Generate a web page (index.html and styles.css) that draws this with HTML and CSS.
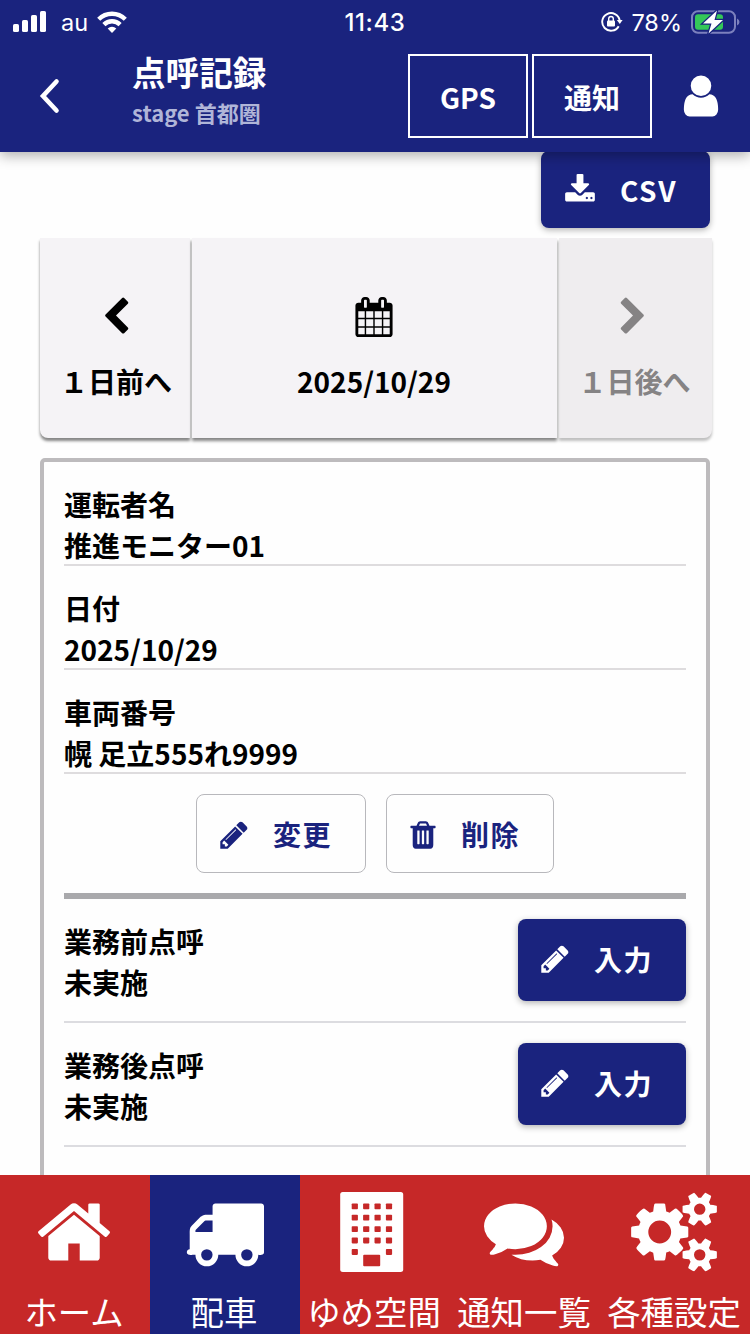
FILE: index.html
```html
<!DOCTYPE html>
<html lang="ja">
<head>
<meta charset="utf-8">
<title>点呼記録</title>
<link rel="stylesheet" href="styles.css">
</head>
<body>
<svg class="defs" width="0" height="0" aria-hidden="true">
  <symbol id="pencil" viewBox="0 0 1792 1792"><path d="M491 1536l91-91-235-235-91 91v107h128v128h107zm523-928q0-22-22-22-10 0-17 7l-542 542q-7 7-7 17 0 22 22 22 10 0 17-7l542-542q7-7 7-17zm-54-192l416 416-832 832h-416v-416zm683 96q0 53-37 90l-166 166-416-416 166-165q36-38 90-38 53 0 91 38l235 234q37 39 37 91z"/></symbol>
</svg>
<div class="app">
  <header class="header">
    <div class="status">
      <div class="status-left">
        <svg width="34" height="22" viewBox="0 0 34 22" fill="currentColor"><rect x="0" y="13" width="6" height="8" rx="1.6"/><rect x="9" y="9" width="6" height="12" rx="1.6"/><rect x="18" y="4" width="6" height="17" rx="1.6"/><rect x="27" y="0" width="6" height="21" rx="1.6"/></svg>
        <span class="carrier">au</span>
        <svg width="30" height="22" viewBox="0 0 30 22" fill="none" stroke="currentColor" stroke-width="4.4"><path d="M1.700 8.200a19 19 0 0 1 26.600 0M6.900 13.600a11.500 11.500 0 0 1 16.200 0"/><path d="M15 22l-4.300-4.400a6.200 6.200 0 0 1 8.600 0z" fill="currentColor" stroke="none"/></svg>
      </div>
      <span class="clock">11:43</span>
      <div class="status-right">
        <svg width="22" height="22" viewBox="0 0 22 22"><path d="M17.700 15.200A8.800 8.800 0 1 1 18.700 9.500" fill="none" stroke="currentColor" stroke-width="1.900"/><path d="M15.800 9h5.800l-2.800 4z" fill="currentColor"/><rect x="6" y="9.400" width="8" height="6" rx="1" fill="currentColor"/><path d="M7.700 10V7.800a2.300 2.300 0 0 1 4.600 0V10" fill="none" stroke="currentColor" stroke-width="1.400"/></svg>
        <span class="percent">78%</span>
        <svg width="50" height="24" viewBox="0 0 50 24"><rect x="1" y="1.300" width="43" height="21.400" rx="6" fill="none" stroke="#7c80bd" stroke-width="2"/><path d="M46 8.500q2.500 1 2.500 3.500T46 15.500z" fill="#7c80bd"/><rect x="4" y="4.300" width="28" height="15.400" rx="3" fill="#34c759"/><path d="M26 .5L12 13.500h8.500L17.500 23.500 32 10h-8.500z" fill="#fff" stroke="#1a237e" stroke-width="2.500" paint-order="stroke"/></svg>
      </div>
    </div>
    <div class="toolbar">
      <button class="back" aria-label="back"><svg width="24" height="38" viewBox="0 0 24 38"><path d="M18.500 4.500L5 19l13.500 14.500" fill="none" stroke="currentColor" stroke-width="4.600" stroke-linecap="round"/></svg></button>
      <div class="titles">
        <h1 class="title">点呼記録</h1>
        <p class="subtitle">stage 首都圏</p>
      </div>
      <button class="outline">GPS</button>
      <button class="outline">通知</button>
      <button class="user" aria-label="user"><svg class="i48" viewBox="0 0 1792 1792"><path d="M1536 1399q0 109-62.500 187t-150.500 78h-854q-88 0-150.500-78t-62.500-187q0-85 8.500-160.500t31.500-152 58.500-131 94-89 134.500-34.500q131 128 313 128t313-128q76 0 134.500 34.500t94 89 58.500 131 31.500 152 8.500 160.500zm-256-887q0 159-112.500 271.500t-271.500 112.500-271.500-112.500-112.500-271.500 112.500-271.500 271.500-112.500 271.500 112.500 112.500 271.500z"/></svg></button>
    </div>
  </header>

  <main class="content">
    <button class="btn primary csv"><svg class="i32" viewBox="0 0 1792 1792"><path d="M1344 1344q0-26-19-45t-45-19-45 19-19 45 19 45 45 19 45-19 19-45zm256 0q0-26-19-45t-45-19-45 19-19 45 19 45 45 19 45-19 19-45zm128-224v320q0 40-28 68t-68 28h-1472q-40 0-68-28t-28-68v-320q0-40 28-68t68-28h465l135 136q58 56 136 56t136-56l136-136h464q40 0 68 28t28 68zm-325-569q17 41-14 70l-448 448q-18 19-45 19t-45-19l-448-448q-31-29-14-70 17-39 59-39h256v-448q0-26 19-45t45-19h256q26 0 45 19t19 45v448h256q42 0 59 39z"/></svg><span>CSV</span></button>

    <nav class="days">
      <button class="day prev"><svg class="i40" viewBox="0 0 1792 1792"><path d="M1427 301l-531 531 531 531q19 19 19 45t-19 45l-166 166q-19 19-45 19t-45-19l-742-742q-19-19-19-45t19-45l742-742q19-19 45-19t45 19l166 166q19 19 19 45t-19 45z"/></svg><span>１日前へ</span></button>
      <button class="day date"><svg class="i40" viewBox="0 0 1792 1792"><path d="M192 1664h288v-288h-288v288zm352 0h320v-288h-320v288zm-352-352h288v-320h-288v320zm352 0h320v-320h-320v320zm-352-384h288v-288h-288v288zm736 736h320v-288h-320v288zm-384-736h320v-288h-320v288zm768 736h288v-288h-288v288zm-384-352h320v-320h-320v320zm-352-864v-288q0-13-9.500-22.500t-22.500-9.500h-64q-13 0-22.500 9.500t-9.500 22.500v288q0 13 9.500 22.500t22.500 9.500h64q13 0 22.500-9.500t9.500-22.500zm736 864h288v-320h-288v320zm-384-384h320v-288h-320v288zm384 0h288v-288h-288v288zm32-480v-288q0-13-9.500-22.500t-22.500-9.500h-64q-13 0-22.500 9.500t-9.500 22.500v288q0 13 9.500 22.500t22.500 9.500h64q13 0 22.500-9.500t9.500-22.500zm384-64v1280q0 52-38 90t-90 38h-1408q-52 0-90-38t-38-90v-1280q0-52 38-90t90-38h128v-96q0-66 47-113t113-47h64q66 0 113 47t47 113v96h384v-96q0-66 47-113t113-47h64q66 0 113 47t47 113v96h128q52 0 90 38t38 90z"/></svg><span>2025/10/29</span></button>
      <button class="day next" disabled><svg class="i40" viewBox="0 0 1792 1792"><path d="M1363 877l-742 742q-19 19-45 19t-45-19l-166-166q-19-19-19-45t19-45l531-531-531-531q-19-19-19-45t19-45l166-166q19-19 45-19t45 19l742 742q19 19 19 45t-19 45z"/></svg><span>１日後へ</span></button>
    </nav>

    <section class="card">
      <dl class="fields">
        <div class="field"><dt>運転者名</dt><dd>推進モニター01</dd></div>
        <div class="field"><dt>日付</dt><dd>2025/10/29</dd></div>
        <div class="field"><dt>車両番号</dt><dd>幌 足立555れ9999</dd></div>
      </dl>
      <div class="actions">
        <button class="btn light edit"><svg class="i32"><use href="#pencil"/></svg><span>変更</span></button>
        <button class="btn light remove"><svg class="i32" viewBox="0 0 1792 1792"><path d="M704 1376v-704q0-14-9-23t-23-9h-64q-14 0-23 9t-9 23v704q0 14 9 23t23 9h64q14 0 23-9t9-23zm256 0v-704q0-14-9-23t-23-9h-64q-14 0-23 9t-9 23v704q0 14 9 23t23 9h64q14 0 23-9t9-23zm256 0v-704q0-14-9-23t-23-9h-64q-14 0-23 9t-9 23v704q0 14 9 23t23 9h64q14 0 23-9t9-23zm-544-992h448l-48-117q-7-9-17-11h-317q-10 2-17 11zm928 32v64q0 14-9 23t-23 9h-96v948q0 83-47 143.500t-113 60.500h-832q-66 0-113-58.500t-47-141.500v-952h-96q-14 0-23-9t-9-23v-64q0-14 9-23t23-9h309l70-167q15-37 54-63t79-26h320q40 0 79 26t54 63l70 167h309q14 0 23 9t9 23z"/></svg><span>削除</span></button>
      </div>
      <div class="call first">
        <div class="call-text"><p>業務前点呼</p><p>未実施</p></div>
        <button class="btn primary input"><svg class="i32"><use href="#pencil"/></svg><span>入力</span></button>
      </div>
      <div class="call">
        <div class="call-text"><p>業務後点呼</p><p>未実施</p></div>
        <button class="btn primary input"><svg class="i32"><use href="#pencil"/></svg><span>入力</span></button>
      </div>
    </section>
  </main>

  <nav class="tabs">
    <a class="tab"><svg class="i80" viewBox="0 0 1792 1792"><path d="M1472 992v480q0 26-19 45t-45 19h-384v-384h-256v384h-384q-26 0-45-19t-19-45v-480q0-1 .5-3t.5-3l575-474 575 474q1 2 1 6zm223-69l-62 74q-8 9-21 11h-3q-13 0-21-7l-692-577-692 577q-12 8-24 7-13-2-21-11l-62-74q-8-10-7-23.500t11-21.500l719-599q32-26 76-26t76 26l244 204v-195q0-14 9-23t23-9h192q14 0 23 9t9 23v408l219 182q10 8 11 21.500t-7 23.500z"/></svg><span>ホーム</span></a>
    <a class="tab active"><svg class="i80" viewBox="0 0 1792 1792"><path d="M640 1408q0-52-38-90t-90-38-90 38-38 90 38 90 90 38 90-38 38-90zm-384-512h384v-256h-158q-13 0-22 9l-195 195q-9 9-9 22v30zm1280 512q0-52-38-90t-90-38-90 38-38 90 38 90 90 38 90-38 38-90zm256-1088v1024q0 15-4 26.500t-13.500 18.500-16.500 11.500-23.500 6-22.500 2-25.500 0-22.500-.5q0 106-75 181t-181 75-181-75-75-181h-384q0 106-75 181t-181 75-181-75-75-181h-64q-3 0-22.500.5t-25.500 0-22.500-2-23.500-6-16.500-11.500-13.500-18.500-4-26.500q0-26 19-45t45-19v-320q0-8-.5-35t0-38 2.500-34.500 6.500-37 14-30.500 22.500-30l198-198q19-19 50.500-32t58.500-13h160v-192q0-26 19-45t45-19h1024q26 0 45 19t19 45z"/></svg><span>配車</span></a>
    <a class="tab"><svg class="i80 building" viewBox="0 0 80 80"><rect x="6.200" width="63" height="80" rx="2.500"/><g class="windows"><path id="w" d="M18.500 11.400h4.600q.8 0 .8.800v4.200q0 .8-.8.800h-4.600q-.8 0-.8-.8v-4.200q0-.8.800-.8z"/><use href="#w" x="11.400"/><use href="#w" x="22.800"/><use href="#w" x="34.200"/><use href="#w" y="11.400"/><use href="#w" x="11.400" y="11.400"/><use href="#w" x="22.800" y="11.400"/><use href="#w" x="34.200" y="11.400"/><use href="#w" y="22.800"/><use href="#w" x="11.400" y="22.800"/><use href="#w" x="22.800" y="22.800"/><use href="#w" x="34.200" y="22.800"/><use href="#w" y="34.200"/><use href="#w" x="11.400" y="34.200"/><use href="#w" x="22.800" y="34.200"/><use href="#w" x="34.200" y="34.200"/><use href="#w" y="45.700"/><use href="#w" x="34.200" y="45.700"/><rect x="29.200" y="62.800" width="17" height="11.400" rx="1"/></g></svg><span>ゆめ空間</span></a>
    <a class="tab"><svg class="i80" viewBox="0 0 1792 1792"><path d="M1408 768q0 139-94 257t-256.500 186.500-353.500 68.500q-86 0-176-16-124 88-278 128-36 9-86 16h-3q-11 0-20.500-8t-11.500-21q-1-3-1-6.500t.5-6.500 2-6l2.500-5 3.500-5.500 4-5 4.500-5 4-4.500q5-6 23-25t26-29.500 22.500-29 25-38.500 20.500-44q-124-72-195-177t-71-224q0-139 94-257t256.500-186.500 353.500-68.500 353.500 68.500 256.500 186.500 94 257zm384 256q0 120-71 224.500t-195 176.500q10 24 20.500 44t25 38.500 22.500 29 26 29.500 23 25q1 1 4 4.500t4.500 5 4 5 3.500 5.500l2.500 5 2 6 .5 6.500-1 6.500q-3 14-13 22t-22 7q-50-7-86-16-154-40-278-128-90 16-176 16-271 0-472-132 58 4 88 4 161 0 309-45t264-129q125-92 192-212t67-254q0-77-23-152 129 71 204 178t75 230z"/></svg><span>通知一覧</span></a>
    <a class="tab"><svg class="cogs" viewBox="0 0 1920 1792"><path d="M896 896q0-106-75-181t-181-75-181 75-75 181 75 181 181 75 181-75 75-181zm768 512q0-52-38-90t-90-38-90 38-38 90q0 53 37.500 90.500t90.500 37.500 90.500-37.500 37.500-90.500zm0-1024q0-52-38-90t-90-38-90 38-38 90q0 53 37.500 90.500t90.500 37.500 90.500-37.500 37.500-90.500zm-384 421v185q0 10-7 19.500t-16 10.500l-155 24q-11 35-32 76 34 48 90 115 7 11 7 20 0 12-7 19-23 30-82.500 89.500t-78.500 59.500q-11 0-21-7l-115-90q-37 19-77 31-11 108-23 155-7 24-30 24h-186q-11 0-20-7.500t-10-17.500l-23-153q-34-10-75-31l-118 89q-7 7-20 7-11 0-21-8-144-133-144-160 0-9 7-19 10-14 41-53t47-61q-23-44-35-82l-152-24q-10-1-17-9.500t-7-19.500v-185q0-10 7-19.500t16-10.500l155-24q11-35 32-76-34-48-90-115-7-11-7-20 0-12 7-20 22-30 82-89t79-59q11 0 21 7l115 90q34-18 77-32 11-108 23-154 7-24 30-24h186q11 0 20 7.500t10 17.500l23 153q34 10 75 31l118-89q8-7 20-7 11 0 21 8 144 133 144 160 0 8-7 19-12 16-42 54t-45 60q23 48 34 82l152 23q10 2 17 10.500t7 19.500zm640 533v140q0 16-149 31-12 27-30 52 51 113 51 138 0 4-4 7-122 71-124 71-8 0-46-47t-52-68q-20 2-30 2t-30-2q-14 21-52 68t-46 47q-2 0-124-71-4-3-4-7 0-25 51-138-18-25-30-52-149-15-149-31v-140q0-16 149-31 13-29 30-52-51-113-51-138 0-4 4-7 4-2 35-20t59-34 30-16q8 0 46 46.500t52 67.500q20-2 30-2t30 2q51-71 92-112l6-2q4 0 124 70 4 3 4 7 0 25-51 138 17 23 30 52 149 15 149 31zm0-1024v140q0 16-149 31-12 27-30 52 51 113 51 138 0 4-4 7-122 71-124 71-8 0-46-47t-52-68q-20 2-30 2t-30-2q-14 21-52 68t-46 47q-2 0-124-71-4-3-4-7 0-25 51-138-18-25-30-52-149-15-149-31v-140q0-16 149-31 13-29 30-52-51-113-51-138 0-4 4-7 4-2 35-20t59-34 30-16q8 0 46 46.500t52 67.500q20-2 30-2t30 2q51-71 92-112l6-2q4 0 124 70 4 3 4 7 0 25-51 138 17 23 30 52 149 15 149 31z"/></svg><span>各種設定</span></a>
  </nav>
</div>
</body>
</html>
```

FILE: styles.css
```css
* { box-sizing: border-box; }
body, h1, p, dl, dd { margin: 0; }
body { background: #fefefe; color: #000; font-family: "Noto Sans CJK JP", sans-serif; }
button { margin: 0; padding: 0; border: 0; background: none; color: inherit; font: inherit; }
svg { display: block; flex: none; }
.defs { position: absolute; }

.app { display: flex; flex-direction: column; height: 1334px; overflow: hidden; }
.i32, .i40, .i48, .i80, .cogs { fill: currentColor; }
.i32 { width: 32px; height: 32px; }
.i40 { width: 40px; height: 40px; }
.i48 { width: 48px; height: 48px; }
.i80 { width: 80px; height: 80px; }
.cogs { width: 86px; height: 80px; }
.windows { fill: #c62828; }

.header { position: relative; z-index: 2; flex: none; height: 152px; background: #1a237e; color: #fff; box-shadow: 0 4px 12px rgba(0, 0, 0, .3); }
.status { display: grid; grid-template-columns: 1fr auto 1fr; align-items: center; height: 40px; padding: 1px 9px 0 13px; font-family: Inter, sans-serif; font-size: 24px; line-height: 39px; }
.status-left, .status-right { display: flex; align-items: center; }
.carrier { margin: 2px 9px 0 14px; font-size: 23.5px; }
.clock { padding-top: 1px; font-weight: 500; letter-spacing: .6px; margin-left: -4px; }
.status-right { justify-content: flex-end; }
.percent { margin: 2px 9px 0 8px; font-size: 23.5px; }

.toolbar { display: flex; align-items: flex-start; gap: 4px; height: 112px; padding-top: 14px; }
.back { width: 128px; padding: 23px 0 0 38px; }
.titles { width: 272px; height: 84px; }
.title { margin-top: -5px; font-size: 33.6px; font-weight: 600; line-height: 46px; }
.subtitle { color: #b0b5d8; font-size: 22px; font-weight: 600; line-height: 34px; }
.outline { width: 120px; height: 84px; padding-top: 1px; border: 2px solid #fff; font-size: 28px; font-weight: 600; }
.user { margin: 18px 0 0 21px; }

.content { flex: 1; min-height: 0; padding: 0 40px; overflow: hidden; }
.btn { display: flex; align-items: center; border-radius: 8px; font-size: 28px; font-weight: 600; letter-spacing: 1.6px; }
.primary { background: #1a237e; color: #fff; box-shadow: 0 2px 6px rgba(0, 0, 0, .3); }
.csv { gap: 24px; width: 169px; height: 77px; margin: -1px 0 0 auto; padding-left: 23px; }

.days { display: grid; grid-template-columns: 150px 365px 153px; gap: 2px; width: 672px; height: 200px; margin-top: 10px; }
.day { display: flex; flex-direction: column; align-items: center; gap: 24px; padding-top: 59px; background: #f5f3f6; font-size: 28px; font-weight: 600; line-height: 41px; box-shadow: 0 3px 3px rgba(0, 0, 0, .48); }
.prev { padding-left: 2px; border-radius: 0 0 0 8px; }
.prev .i40 { margin-right: 1px; }
.date { position: relative; z-index: 1; padding-right: 1px; }
.date .i40 { margin-right: 1px; }
.next { padding-right: 2px; background: #efedef; color: #858384; box-shadow: 0 3px 3px rgba(0, 0, 0, .25); border-radius: 0 0 8px 0; }
.next .i40 { margin-right: 4px; }

.card { height: 820px; margin-top: 20px; padding: 0 20px; border: 4px solid #bdbbbd; border-radius: 5px; font-size: 28px; font-weight: 600; line-height: 41px; }
.field { height: 104px; padding-top: 22px; border-bottom: 2px solid #dedcde; }
.actions { display: flex; justify-content: center; gap: 20px; height: 119px; padding: 20px 0; }
.light { padding-top: 2px; border: 1px solid #b8b8bc; color: #1a237e; }
.edit { gap: 23px; width: 170px; padding-left: 21px; }
.remove { gap: 22px; width: 168px; padding-left: 20px; }
.call { display: flex; align-items: flex-start; justify-content: space-between; height: 124px; padding-top: 20px; border-bottom: 2px solid #dcdce0; }
.call-text { padding-top: 2px; }
.first { height: 130px; border-top: 6px solid #a9a9ac; }
.input { gap: 23px; width: 168px; height: 82px; padding: 0 0 2px 21px; }

.tabs { display: grid; grid-template-columns: repeat(5, 1fr); flex: none; height: 159px; background: #c62828; color: #fff; }
.tab { display: flex; flex-direction: column; align-items: center; padding: 17px 2px 0 0; font-size: 33.4px; font-weight: 400; line-height: 49px; white-space: nowrap; }
.tab span { margin-top: 14px; }
.active { background: #1a237e; }
```
